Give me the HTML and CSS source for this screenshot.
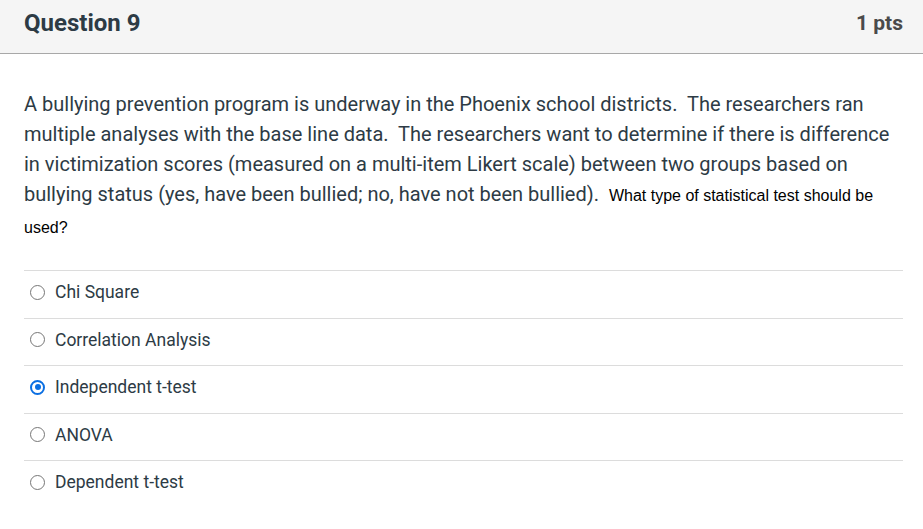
FILE: index.html
```html
<!DOCTYPE html>
<html>
<head>
<meta charset="utf-8">
<link rel="stylesheet" href="styles.css">
</head>
<body>
<div class="question">
  <div class="header">
    <span class="title">Question 9</span>
    <span class="pts">1 pts</span>
  </div>
  <div class="body">
    <p class="text">A bullying prevention program is underway in the Phoenix school districts.&nbsp; The researchers ran multiple analyses with the base line data.&nbsp; The researchers want to determine if there is difference in victimization scores (measured on a multi-item Likert scale) between two groups based on bullying status (yes, have been bullied; no, have not been bullied).&nbsp; <span class="small">What type of statistical test should be used?</span></p>
    <div class="answers">
      <div class="answer"><span class="radio"></span><span class="label">Chi Square</span></div>
      <div class="answer"><span class="radio"></span><span class="label">Correlation Analysis</span></div>
      <div class="answer"><span class="radio checked"></span><span class="label">Independent t-test</span></div>
      <div class="answer"><span class="radio"></span><span class="label">ANOVA</span></div>
      <div class="answer"><span class="radio"></span><span class="label">Dependent t-test</span></div>
    </div>
  </div>
</div>
</body>
</html>
```
FILE: styles.css
```css
html, body {
  margin: 0;
  padding: 0;
  background: #ffffff;
}
body {
  font-family: Roboto, "Liberation Sans", Arial, sans-serif;
  color: #2d3b45;
}
.header {
  height: 54px;
  box-sizing: border-box;
  background: #f5f5f5;
  border-bottom: 1px solid #a8a8a8;
  display: flex;
  align-items: center;
  justify-content: space-between;
  padding: 0 20px 8px 24px;
}
.title {
  font-size: 24px;
  font-weight: 700;
  color: #2d3b45;
}
.pts {
  font-size: 21px;
  font-weight: 700;
  color: #4a4a4a;
}
.body {
  padding: 35px 20px 0 24px;
}
.text {
  margin: 0;
  font-size: 20px;
  line-height: 30px;
  color: #2d3b45;
}
.small {
  font-family: "Liberation Sans", Arial, sans-serif;
  font-size: 16px;
  line-height: 30px;
  color: #000000;
}
.answers {
  margin-top: 27px;
}
.answer {
  display: flex;
  align-items: center;
  height: 47.5px;
  box-sizing: border-box;
  border-top: 1px solid #dcdcdc;
  padding-left: 6px;
  padding-bottom: 4px;
}
.radio {
  width: 15px;
  height: 15px;
  box-sizing: border-box;
  border: 1px solid #767676;
  border-radius: 50%;
  margin-right: 10px;
  flex: none;
  position: relative;
}
.radio.checked {
  border: 2px solid #0b6fe2;
}
.radio.checked::after {
  content: "";
  position: absolute;
  left: 2.5px;
  top: 2.5px;
  width: 6px;
  height: 6px;
  border-radius: 50%;
  background: #0b6fe2;
}
.label {
  font-size: 17.5px;
  color: #2d3b45;
}
```
